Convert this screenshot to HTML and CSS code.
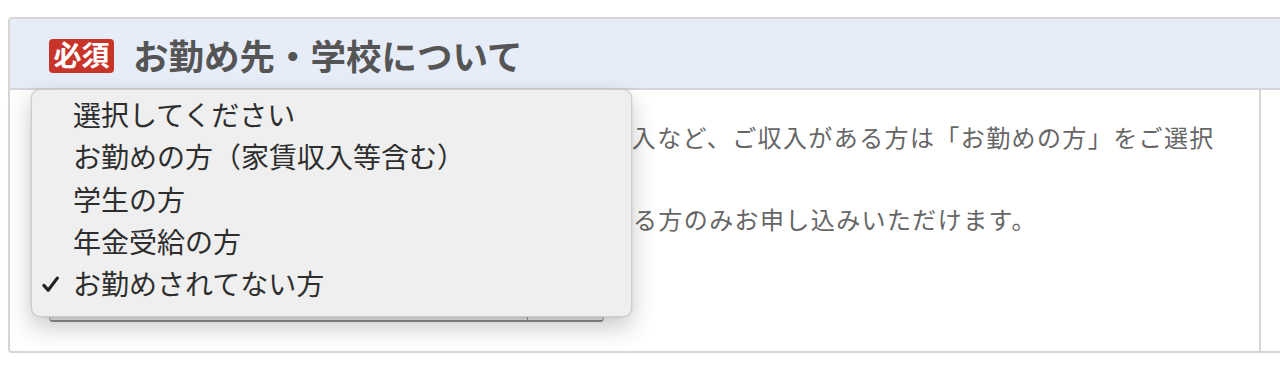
FILE: index.html
```html
<!DOCTYPE html>
<html lang="ja">
<head>
<meta charset="utf-8">
<title>お勤め先・学校について</title>
<link rel="stylesheet" href="styles.css">
</head>
<body>
<div class="page">
  <section class="card">
    <header class="card-head">
      <span class="badge">必須</span>
      <h2 class="title">お勤め先・学校について</h2>
    </header>
    <div class="card-body">
      <div class="cell">
        <p class="note">※お勤めされていない方でも、年金の受給や家賃収入など、ご収入がある方は「お勤めの方」をご選択ください。</p>
        <p class="note">※学生の方は、アルバイト等で安定したご収入のある方のみお申し込みいただけます。</p>
        <div class="select">
          <span class="select-value">お勤めされてない方</span>
          <span class="select-arrow"></span>
        </div>
      </div>
      <div class="cell-side"></div>
    </div>
    <ul class="menu">
      <li class="menu-item">選択してください</li>
      <li class="menu-item">お勤めの方（家賃収入等含む）</li>
      <li class="menu-item">学生の方</li>
      <li class="menu-item">年金受給の方</li>
      <li class="menu-item is-checked"><svg class="check" viewBox="0 0 16 16" width="17" height="17"><path d="M1.8 8.8 L5.8 13.4 L14.4 2.0" fill="none" stroke="#222" stroke-width="3" stroke-linecap="round" stroke-linejoin="round"/></svg>お勤めされてない方</li>
    </ul>
  </section>
</div>
</body>
</html>
```
FILE: styles.css
```css
html, body {
  margin: 0;
  padding: 0;
  background: #ffffff;
  overflow: hidden;
}

body {
  font-family: "Noto Sans CJK JP", "Noto Sans", sans-serif;
  color: #333;
}

.page {
  padding: 17px 0 0 8px;
}

.card {
  position: relative;
  width: 1320px;
  border: 2px solid #d6d6d6;
  border-radius: 4px;
  box-sizing: border-box;
}

.card-head {
  display: flex;
  align-items: center;
  height: 71px;
  box-sizing: border-box;
  padding: 5px 0 0 39px;
  background: #e6ecf8;
  border-bottom: 2px solid #d3d6dc;
  border-radius: 2px 2px 0 0;
}

.badge {
  display: block;
  height: 34px;
  line-height: 31px;
  padding: 0 4.5px 3px;
  box-sizing: border-box;
  font-size: 28px;
  font-weight: 700;
  color: #fff;
  background: #c8342a;
  border-radius: 4px;
}

.title {
  margin: -2px 0 0 19px;
  font-size: 35.5px;
  line-height: 40px;
  font-weight: 700;
  color: #555;
}

.card-body {
  display: grid;
  grid-template-columns: 1251px 1fr;
}

.cell {
  padding: 26px 0 29px 39px;
  border-right: 2px solid #d6d6d6;
}

.note {
  margin: 0;
  width: 1182px;
  font-size: 24px;
  line-height: 41px;
  letter-spacing: 1.4px;
  color: #666;
}

.select {
  display: flex;
  width: 555px;
  height: 46px;
  margin-top: 37px;
  box-sizing: border-box;
  background: #ececec;
  border: 1px solid #b5b5b5;
  border-bottom: 2px solid #8e8e8e;
  border-radius: 4px;
}

.select-value {
  flex: 1;
  font-size: 24px;
  line-height: 42px;
  padding-left: 12px;
  color: #333;
}

.select-arrow {
  width: 75px;
  border-left: 1px solid #9a9a9a;
}

.menu {
  position: absolute;
  left: 21px;
  top: 70px;
  width: 601px;
  height: 228px;
  margin: 0;
  padding: 3px 0 0 41px;
  box-sizing: border-box;
  list-style: none;
  background: #efefef;
  border: 1px solid #cdcdcd;
  border-radius: 9px;
  box-shadow: 0 10px 24px rgba(0, 0, 0, 0.22), 0 0 2px rgba(0, 0, 0, 0.15);
}

.menu-item {
  position: relative;
  font-size: 28px;
  line-height: 42.3px;
  color: #2e2e2e;
  white-space: nowrap;
}

.check {
  position: absolute;
  left: -31px;
  top: 14px;
}
```
